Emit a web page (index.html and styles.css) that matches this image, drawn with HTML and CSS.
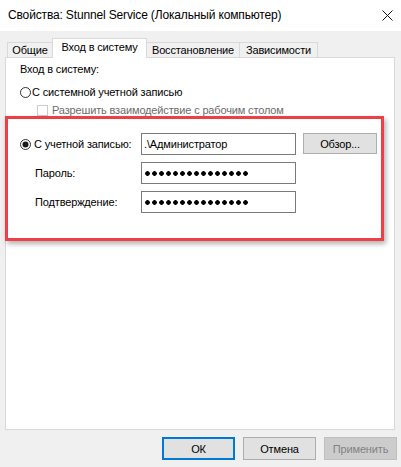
FILE: index.html
```html
<!DOCTYPE html>
<html lang="ru">
<head>
<meta charset="UTF-8">
<meta name="viewport" content="width=device-width, initial-scale=1.0">
<title>Свойства: Stunnel Service</title>
<link rel="stylesheet" href="styles.css">
</head>
<body>

<div class="window">
    <div class="titlebar">
        <span class="title">Свойства: Stunnel Service (Локальный компьютер)</span>
        <svg class="close" width="11" height="11" viewBox="0 0 11 11">
            <path d="M0.5 0.5 L10.5 10.5 M10.5 0.5 L0.5 10.5" stroke="#111" stroke-width="1" fill="none"/>
        </svg>
    </div>

    <div class="content">
        <div class="tabs">
            <div class="tab tab-general">Общие</div>
            <div class="tab tab-logon active">Вход в систему</div>
            <div class="tab tab-recovery">Восстановление</div>
            <div class="tab tab-deps">Зависимости</div>
        </div>

        <div class="panel">
            <div class="caption">Вход в систему:</div>
            <div class="option">
                <svg class="radio" width="11" height="11" viewBox="0 0 11 11">
                    <circle cx="5.5" cy="5.5" r="5" stroke="#333" stroke-width="1" fill="#fff"/>
                </svg>
                <span>С системной учетной записью</span>
            </div>
            <div class="option sub disabled">
                <span class="check"></span>
                <span>Разрешить взаимодействие с рабочим столом</span>
            </div>

            <div class="highlight">
                <div class="account-grid">
                    <div class="field-label first">
                        <svg class="radio" width="11" height="11" viewBox="0 0 11 11">
                            <circle cx="5.5" cy="5.5" r="5" stroke="#333" stroke-width="1" fill="#fff"/>
                            <circle cx="5.5" cy="5.5" r="3" fill="#1a1a1a"/>
                        </svg>
                        <span>С учетной записью:</span>
                    </div>
                    <div class="input">.\Администратор</div>
                    <button class="btn browse">Обзор...</button>

                    <div class="field-label">Пароль:</div>
                    <div class="input"><span class="dots"></span></div>
                    <div></div>

                    <div class="field-label">Подтверждение:</div>
                    <div class="input"><span class="dots"></span></div>
                    <div></div>
                </div>
            </div>
        </div>

        <div class="actions">
            <button class="btn default">ОК</button>
            <button class="btn">Отмена</button>
            <button class="btn" disabled>Применить</button>
        </div>
    </div>
</div>

</body>
</html>
```

FILE: styles.css
```css
body {
    margin: 0;
    font-family: "Liberation Sans", Arial, sans-serif;
    font-size: 11px;
    letter-spacing: -0.15px;
    color: #000;
    background-color: #f0f0f0;
}

.window {
    width: 401px;
    height: 467px;
    background-color: #f0f0f0;
}

.titlebar {
    height: 31px;
    background-color: #fff;
    display: flex;
    align-items: center;
    justify-content: space-between;
    padding: 0 8px 0 8px;
    box-sizing: border-box;
}

.title {
    font-size: 12px;
    margin-top: -1px;
}

.close {
    display: block;
    margin-top: -1px;
}

.content {
    padding: 7px 4px 0 5px;
}

/* tab strip */
.tabs {
    display: flex;
    align-items: flex-end;
    margin-left: 2px;
    margin-bottom: -1px;
    position: relative;
    z-index: 1;
}

.tab {
    height: 16px;
    line-height: 15px;
    box-sizing: border-box;
    text-align: center;
    border: 1px solid #d9d9d9;
    margin-left: -1px;
    background-color: #f0f0f0;
    white-space: nowrap;
}

.tab-general {
    width: 46px;
    margin-left: 0;
}

.tab-logon {
    width: 95px;
}

.tab-recovery {
    width: 94px;
}

.tab-deps {
    width: 79px;
}

.tab.active {
    height: 20px;
    line-height: 17px;
    border-bottom: none;
    background-color: #fff;
    position: relative;
    z-index: 2;
}

.panel {
    width: 390px;
    height: 373px;
    box-sizing: border-box;
    border: 1px solid #d9d9d9;
    background-color: #fff;
    padding-top: 4px;
}

.caption {
    line-height: 15px;
    margin-left: 14px;
}

.option {
    display: flex;
    align-items: center;
    line-height: 15px;
    margin-left: 14px;
    margin-top: 8px;
}

.option .radio {
    margin-right: 1px;
}

.option.sub {
    margin-left: 31px;
    margin-top: 3px;
}

.option.disabled {
    color: #6d6d6d;
}

.check {
    width: 11px;
    height: 11px;
    box-sizing: border-box;
    border: 1px solid #cccccc;
    margin-right: 4px;
}

/* red annotation frame */
.highlight {
    position: relative;
    z-index: 1;
    width: 379px;
    box-sizing: border-box;
    margin: -2px 0 0 -1px;
    border: 3px solid #ee3f44;
    background-color: #fff;
    padding: 14px 0 25px 12px;
    box-shadow: 2px 3px 5px rgba(0, 0, 0, 0.3);
}

.account-grid {
    display: grid;
    grid-template-columns: 114px 155px 74px;
    grid-template-rows: 22px 22px 22px;
    column-gap: 7px;
    row-gap: 7px;
}

.field-label {
    display: flex;
    align-items: center;
    padding-left: 15px;
    white-space: nowrap;
}

.field-label.first {
    padding-left: 0;
}

.field-label.first .radio {
    margin-right: 3px;
}

.input {
    box-sizing: border-box;
    border: 1px solid #7a7a7a;
    padding: 0 2px;
    display: flex;
    align-items: center;
    background-color: #fff;
}

.dots {
    display: block;
    width: 105px;
    height: 5px;
    background: radial-gradient(circle, #000 2px, transparent 2.6px) 0 0 / 7px 5px repeat-x;
}

.btn {
    font-family: "Liberation Sans", Arial, sans-serif;
    font-size: 11px;
    letter-spacing: -0.15px;
    color: #000;
    background-color: #e1e1e1;
    border: 1px solid #adadad;
    padding: 0;
    box-sizing: border-box;
}

.btn.browse {
    height: 21px;
}

.actions {
    display: flex;
    justify-content: flex-end;
    gap: 8px;
    padding-top: 7px;
}

.actions .btn {
    width: 73px;
    height: 23px;
}

.btn.default {
    border: 2px solid #0078d7;
}

.btn:disabled {
    background-color: #cccccc;
    border-color: #bfbfbf;
    color: #838383;
}
```
